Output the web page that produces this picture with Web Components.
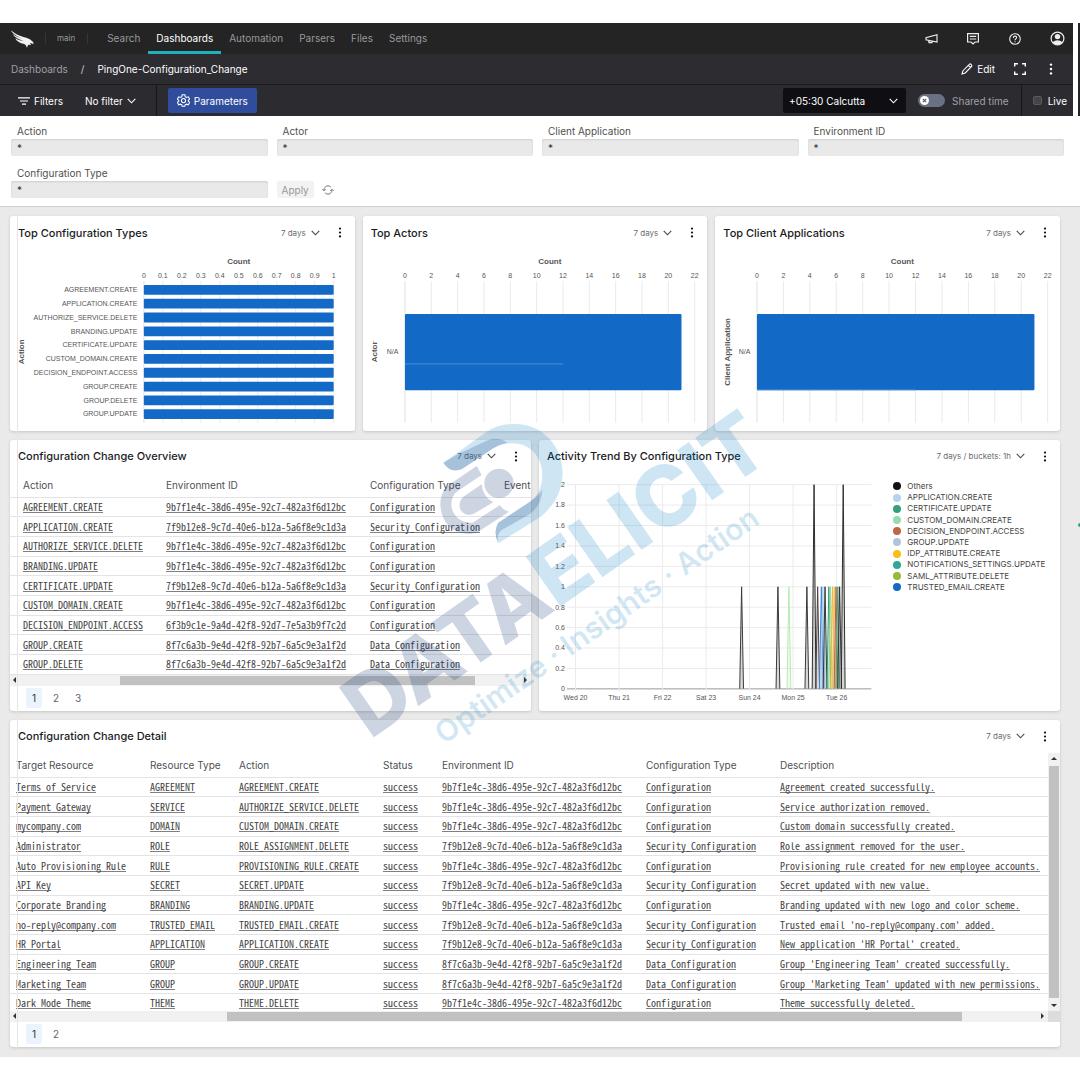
<!DOCTYPE html>
<html lang="en">
<head>
<meta charset="utf-8">
<title>PingOne-Configuration_Change</title>
<meta name="viewport" content="width=device-width, initial-scale=1">
<style>
  body { margin: 0; background: #fff; font-family: Inter, "Liberation Sans", sans-serif; color: #222; }
</style>
</head>
<body>
<dashboard-page></dashboard-page>

<script>
const chevron = '<svg class="chev" width="9" height="6" viewBox="0 0 9 6" fill="none" stroke="currentColor" stroke-width="1.1" aria-hidden="true"><path d="M.7.8 4.5 4.8 8.3.8"/></svg>';

class BaseElement extends HTMLElement {
  connectedCallback() {
    if (this.shadowRoot) return;
    this.attachShadow({ mode: 'open' }).innerHTML =
      '<style>*{box-sizing:border-box}button,input,select{font:inherit;color:inherit;margin:0;border:0;padding:0;background:none}a{color:inherit}svg{display:block}' +
      this.css() + '</style>' + this.html();
  }
}

customElements.define('top-nav', class extends BaseElement {
  css() { return `
    :host { display: flex; align-items: center; height: 31px; background: #242424; color: #98989e; font-size: 10px; padding: 0 8px 0 11px; }
    .logo { width: 23px; height: 18px; }
    .space { font-size: 8px; margin: 0 10px 0 11px; padding: 0 12px 0 11px; border: solid #37373a; border-width: 0 1px; line-height: 11px; }
    nav { display: flex; align-self: stretch; margin-left: 1px; }
    nav a { display: flex; align-items: center; padding: 0 8px 1px; text-decoration: none; border: solid transparent; border-width: 3px 0; }
    nav a.on { color: #fff; border-bottom-color: #22b1b8; }
    .tools { display: flex; align-items: center; gap: 28px; margin-left: auto; color: #eee; }
  `; }
  html() { return `
    <svg class="logo" viewBox="0 0 69 54" fill="#f2f2f2" aria-label="Falcon"><path d="M0 1C10 10 20 15 31 19C42 23 55 25 60 31C64 34 69 36 67 43C64 40 61 39 57 40L60 46C55 43 51 43 50 48L48 53C45 47 44 43 39 42C27 40 16 33 13 25C22 31 31 32 38 34C25 28 10 22 5 13C15 20 26 24 34 27C21 20 5 14 0 1Z"/></svg>
    <span class="space">main</span>
    <nav><a href="#search">Search</a><a class="on" href="#dashboards">Dashboards</a><a href="#automation">Automation</a><a href="#parsers">Parsers</a><a href="#files">Files</a><a href="#settings">Settings</a></nav>
    <div class="tools">
      <button aria-label="Announcements"><svg width="13" height="14" viewBox="0 0 13 14" fill="none" stroke="currentColor" stroke-width="1.1"><path d="M12 2.8V10L1 7.8V5.6ZM3.5 8.3 4 10.6H7V9"/></svg></button>
      <button aria-label="Messages"><svg width="14" height="14" viewBox="0 0 14 14" fill="none" stroke="currentColor" stroke-width="1.2"><path d="M1.6 1.6H12.4V10H9L7 12L5 10H1.6ZM3.8 4.4H10.2M3.8 7H10.2"/></svg></button>
      <button aria-label="Help"><svg width="14" height="14" viewBox="0 0 14 14" fill="none" stroke="currentColor" stroke-width="1.1"><circle cx="7" cy="7" r="5.3"/><path d="M5.3 5.9C5.3 3.5 8.8 3.6 8.6 5.7C8.5 6.8 7 6.8 7 8.2M7 9.2V10.3"/></svg></button>
      <button aria-label="Account"><svg width="15" height="15" viewBox="0 0 15 15"><circle cx="7.5" cy="7.5" r="6.4" fill="none" stroke="currentColor" stroke-width="1.2"/><circle cx="7.5" cy="5.6" r="2.7" fill="currentColor"/><path fill="currentColor" d="M2.6 10.9Q7.5 7.4 12.4 10.9Q10.5 13.8 7.5 13.8T2.6 10.9Z"/></svg></button>
    </div>`; }
});

customElements.define('crumb-bar', class extends BaseElement {
  css() { return `
    :host { display: flex; align-items: center; height: 31px; background: #2d2c31; border-bottom: 1px solid #1a1a1c; color: #a0a0a6; font-size: 10px; padding: 0 16px 0 11px; }
    a { text-decoration: none; }
    i { font-style: normal; margin: 0 13px; color: #c8c8cc; }
    strong { color: #fff; font-weight: 400; }
    .tools { display: flex; align-items: center; gap: 19px; margin-left: auto; color: #fff; }
    .edit { display: flex; align-items: center; gap: 4px; }
  `; }
  html() { return `
    <a href="#dashboards">Dashboards</a><i>/</i><strong>PingOne-Configuration_Change</strong>
    <div class="tools">
      <button class="edit"><svg width="12" height="12" viewBox="0 0 12 12" fill="none" stroke="currentColor" stroke-width="1.1"><path d="M1 11 2 7.7 8.6 1.1Q9.3.6 10.1 1.4T10.8 3.2L4.2 9.9ZM7.4 2.4 9.5 4.5"/></svg>Edit</button>
      <button aria-label="Full screen"><svg width="12" height="12" viewBox="0 0 12 12" fill="none" stroke="currentColor" stroke-width="1.4"><path d="M.7 3.6V.7H3.9M8.1.7H11.3V3.6M11.3 8.4V11.3H8.1M3.9 11.3H.7V8.4"/></svg></button>
      <button aria-label="More"><svg width="12" height="12" viewBox="0 0 12 12" fill="currentColor"><circle cx="6" cy="1.6" r="1.2"/><circle cx="6" cy="6" r="1.2"/><circle cx="6" cy="10.4" r="1.2"/></svg></button>
    </div>`; }
});

customElements.define('filter-bar', class extends BaseElement {
  css() { return `
    :host { display: flex; align-items: center; height: 31px; background: #2c2b30; color: #fff; font-size: 10px; padding: 0 6px 0 18px; }
    button { display: flex; align-items: center; gap: 4px; white-space: nowrap; }
    .nof { margin: 0 20px 0 22px; }
    .bar { align-self: stretch; width: 1px; background: #161618; }
    .prm { height: 25px; margin-left: 11px; padding: 0 9px; background: #304d9d; border-radius: 2px; }
    .zone { display: flex; align-items: center; width: 123px; height: 25px; background: #0f0e13; border-radius: 2px; margin-left: auto; padding-right: 8px; }
    select { appearance: none; flex: 1; height: 25px; padding-left: 6px; outline: 0; }
    .zone svg { pointer-events: none; }
    .sw { display: flex; align-items: center; gap: 7px; margin: 0 12px; color: #a0a0a6; }
    .sw span { position: relative; }
    .sw input { appearance: none; display: block; width: 27px; height: 13px; border-radius: 7px; background: #6a7184; }
    .sw svg { position: absolute; left: 2px; top: 2px; pointer-events: none; }
    .live { display: flex; align-items: center; gap: 6px; margin-left: 11px; }
    .live input { appearance: none; width: 9px; height: 9px; background: #454549; border: 1px solid #5a5a5e; border-radius: 2px; }
  `; }
  html() { return `
    <button><svg width="12" height="8" viewBox="0 0 12 8" stroke="currentColor" stroke-width="1.2"><path d="M0 .8H12M2 4H10M4 7.2H8"/></svg>Filters</button>
    <button class="nof">No filter ${chevron}</button>
    <div class="bar"></div>
    <button class="prm"><svg width="13" height="13" viewBox="0 0 24 24" fill="none" stroke="currentColor" stroke-width="2"><path d="M9.5 1.5H14.5L15.2 5L17.5 6.3L20.9 5.2L23.3 9.5L20.7 11.9V13.1L23.3 15.5L20.9 19.8L17.5 18.7L15.2 20L14.5 22.5H9.5L8.8 20L6.5 18.7L3.1 19.8L.7 15.5L3.3 13.1V11.9L.7 9.5L3.1 5.2L6.5 6.3L8.8 5Z"/><circle cx="12" cy="12.2" r="3.8"/></svg>Parameters</button>
    <div class="zone"><select aria-label="Time zone"><option>+05:30 Calcutta</option></select>${chevron}</div>
    <label class="sw"><span><input type="checkbox" role="switch"><svg width="9" height="9" viewBox="0 0 9 9"><circle cx="4.5" cy="4.5" r="4.5" fill="#fff"/><path stroke="#555b6c" stroke-width="1.2" d="M2.8 2.8 6.2 6.2M6.2 2.8 2.8 6.2"/></svg></span>Shared time</label>
    <div class="bar"></div>
    <label class="live"><input type="checkbox">Live</label>`; }
});

customElements.define('param-field', class extends BaseElement {
  css() { return `
    :host { display: block; }
    label { display: block; font-size: 10px; line-height: 15px; padding-left: 6px; color: #505050; }
    input { display: block; width: 100%; height: 17px; padding: 0 6px; background: #e9e9e9; border-radius: 2px; box-shadow: inset 0 1px 2px #cfcfcf; font-size: 10px; color: #333; outline: 0; }
  `; }
  html() { return `<label for="f">${this.getAttribute('label')}</label><input id="f" type="text" value="*">`; }
});

customElements.define('param-panel', class extends BaseElement {
  css() { return `
    :host { display: grid; grid-template-columns: repeat(4, 1fr); gap: 10px 9px; align-items: end; padding: 8px 16px 8px 11px; background: #fff; border-bottom: 1px solid #cfcfcf; }
    .act { display: flex; align-items: center; gap: 8px; }
    .apply { height: 17px; padding: 0 5px; background: #f2f2f2; color: #999; font-size: 10px; border-radius: 2px; }
    .re { color: #777; }
  `; }
  html() { return `
    <param-field label="Action"></param-field><param-field label="Actor"></param-field>
    <param-field label="Client Application"></param-field><param-field label="Environment ID"></param-field>
    <param-field label="Configuration Type"></param-field>
    <div class="act"><button class="apply">Apply</button><button class="re" aria-label="Reset"><svg width="12" height="10" viewBox="0 0 12 10" fill="none" stroke="currentColor"><path d="M2 5.3C2 .4 7.2-.2 9.2 2.4M10 4.7C10 9.6 4.8 10.2 2.8 7.6M.3 4 2 5.8 3.8 4M8.2 6 10 4.2 11.7 6"/></svg></button></div>`; }
});

customElements.define('dash-card', class extends BaseElement {
  css() { return `
    :host { display: flex; flex-direction: column; min-width: 0; background: #fff; border-radius: 3px; box-shadow: 0 1px 3px #c4c4c4; overflow: hidden; }
    header { display: flex; align-items: center; height: 33px; padding: 0 13px 0 8px; flex: none; }
    h2 { margin: 0; font-size: 11px; font-weight: 500; color: #1c1c1e; flex: 1; white-space: nowrap; }
    button { display: flex; align-items: center; gap: 5px; font-size: 8px; color: #6c6c70; }
    .chev { color: #444; }
    .more { margin-left: 18px; }
  `; }
  html() { return `
    <header><h2>${this.getAttribute('heading')}</h2><button>${this.getAttribute('range') || '7 days'}${chevron}</button>
    <button class="more" aria-label="More"><svg width="4" height="11" viewBox="0 0 4 11" fill="#111"><circle cx="2" cy="1.6" r="1.1"/><circle cx="2" cy="5.5" r="1.1"/><circle cx="2" cy="9.4" r="1.1"/></svg></button></header>
    <slot></slot>`; }
});

const chartText = 'svg{width:100%;height:auto}text{font-family:"Liberation Sans",sans-serif;font-size:7px;fill:#555}.ttl{font-size:8px;font-weight:700}';

customElements.define('bar-chart', class extends BaseElement {
  css() { return ':host{display:block}' + chartText; }
  html() {
    const n = k => Number(this.getAttribute(k));
    const labels = this.getAttribute('labels').split(' '), x0 = n('left'), x1 = n('right'), max = n('max'), step = n('step');
    const top = 32, bottom = 174, many = labels.length > 1, pitch = many ? 13.83 : 76, bar = many ? 9.8 : 76.5, y0 = many ? 36 : 65;
    let s = `<text class="ttl" text-anchor="middle" x="${(x0 + x1) / 2}" y="15">Count</text>`;
    s += `<text class="ttl" text-anchor="middle" transform="translate(${n('axis-x')} 103) rotate(-90)">${this.getAttribute('axis')}</text>`;
    for (let i = 0; i * step <= max + 1e-6; i++) {
      const x = x0 + (x1 - x0) * i * step / max;
      s += `<path d="M${x} ${top}V${bottom}" stroke="#eaeaec" stroke-width="${i ? 1 : 1.5}"/><text text-anchor="middle" x="${x}" y="29">${+(i * step).toFixed(1)}</text>`;
    }
    labels.forEach((l, i) => {
      const y = y0 + i * pitch, w = (x1 - x0) * n('value') / max;
      s += `<rect x="${x0}" y="${y}" width="${w}" height="${bar}" rx="1" fill="#126ac6"/><text text-anchor="end" x="${x0 - 6.5}" y="${y + bar / 2 + 2.3}">${l}</text>`;
    });
    if (this.hasAttribute('mark')) s += `<path d="M${x0} ${n('mark')}H${x0 + (x1 - x0) * 12 / 22}" stroke="#5b97d8" stroke-width=".8"/>`;
    return `<svg viewBox="0 0 345 182" role="img" aria-label="${this.getAttribute('axis')} count">${s}</svg>`;
  }
});

customElements.define('trend-chart', class extends BaseElement {
  css() { return `:host{display:grid;grid-template-columns:355fr 167fr}${chartText}
    ul { list-style: none; margin: 8px 0 0; padding: 0; height: 112px; display: flex; flex-direction: column; font-size: 8px; color: #444; }
    li { flex: 1; display: flex; align-items: center; gap: 6px; white-space: nowrap; line-height: 11px; }
    li::before { content: ""; width: 8px; height: 8px; border-radius: 50%; background: var(--c); }`; }
  html() {
    let s = '';
    for (let i = 0; i <= 10; i++) {
      const y = 216.3 - i * 20.46;
      s += `<path d="M28 ${y}H333" stroke="${i ? '#ebebed' : '#999'}"/><text text-anchor="end" x="26" y="${y + 2.4}">${+(i * .2).toFixed(1)}</text>`;
    }
    ['Wed 20', 'Thu 21', 'Fri 22', 'Sat 23', 'Sun 24', 'Mon 25', 'Tue 26'].forEach((d, i) => {
      const x = 36.6 + 43.6 * i;
      s += `<path d="M${x} 11.7V219" stroke="#ebebed"/><text text-anchor="middle" x="${x}" y="227">${d}</text>`;
    });
    [[203, 1, '#3a3a3c'], [239.4, 1, '#3a3a3c'], [250.4, 1, '#b4edae'], [268.4, 1, '#3a3a3c'], [275.6, 2, '#2c2c2e'], [279.2, 1, '#4a4044'], [282.9, 1, '#3f86d6'], [284.4, 1, '#a9cdec'], [286.6, 1, '#33373f'], [290.4, 1, '#2ba36e'], [292, 1, '#93d8ac'], [294, 1, '#f5bd1f'], [295.8, 1, '#e8c07a'], [297.6, 1, '#bb5f3f'], [299.4, 1, '#3fa77e'], [301.2, 1, '#303034'], [304.8, 2, '#2c2c2e']].forEach(([x, v, c]) => {
      s += `<path d="M${x - 1.9} 216L${x} ${216.3 - v * 102.3}L${x + 1.9} 216" fill="${c}" fill-opacity=".2" stroke="${c}" stroke-linejoin="bevel"/>`;
    });
    const legend = [['Others', '#111'], ['APPLICATION.CREATE', '#b3d3ef'], ['CERTIFICATE.UPDATE', '#33a17c'], ['CUSTOM_DOMAIN.CREATE', '#98dbb0'], ['DECISION_ENDPOINT.ACCESS', '#bf6647'], ['GROUP.UPDATE', '#b2c4dc'], ['IDP_ATTRIBUTE.CREATE', '#f8be1c'], ['NOTIFICATIONS_SETTINGS.UPDATE', '#2fa894'], ['SAML_ATTRIBUTE.DELETE', '#97bb33'], ['TRUSTED_EMAIL.CREATE', '#126ac6']];
    return `<svg viewBox="0 0 355 238" role="img" aria-label="Activity trend">${s}</svg><ul>${legend.map(([t, c]) => `<li style="--c:${c}">${t}</li>`).join('')}</ul>`;
  }
});

const ENV = { a: '9b7f1e4c-38d6-495e-92c7-482a3f6d12bc', b: '7f9b12e8-9c7d-40e6-b12a-5a6f8e9c1d3a', c: '6f3b9c1e-9a4d-42f8-92d7-7e5a3b9f7c2d', d: '8f7c6a3b-9e4d-42f8-92b7-6a5c9e3a1f2d' };
const C = 'Configuration', S = 'Security_Configuration', D = 'Data_Configuration', ok = 'success';
const TABLES = {
  overview: { cols: ['Action', 'Environment ID', 'Configuration Type', 'Event'], rows: [
    ['AGREEMENT.CREATE', ENV.a, C], ['APPLICATION.CREATE', ENV.b, S], ['AUTHORIZE_SERVICE.DELETE', ENV.a, C], ['BRANDING.UPDATE', ENV.a, C], ['CERTIFICATE.UPDATE', ENV.b, S], ['CUSTOM_DOMAIN.CREATE', ENV.a, C], ['DECISION_ENDPOINT.ACCESS', ENV.c, C], ['GROUP.CREATE', ENV.d, D], ['GROUP.DELETE', ENV.d, D]] },
  detail: { cols: ['Target Resource', 'Resource Type', 'Action', 'Status', 'Environment ID', 'Configuration Type', 'Description'], rows: [
    ['Terms of Service', 'AGREEMENT', 'AGREEMENT.CREATE', ok, ENV.a, C, 'Agreement created successfully.'],
    ['Payment Gateway', 'SERVICE', 'AUTHORIZE_SERVICE.DELETE', ok, ENV.a, C, 'Service authorization removed.'],
    ['mycompany.com', 'DOMAIN', 'CUSTOM_DOMAIN.CREATE', ok, ENV.a, C, 'Custom domain successfully created.'],
    ['Administrator', 'ROLE', 'ROLE_ASSIGNMENT.DELETE', ok, ENV.b, S, 'Role assignment removed for the user.'],
    ['Auto Provisioning Rule', 'RULE', 'PROVISIONING_RULE.CREATE', ok, ENV.a, C, 'Provisioning rule created for new employee accounts.'],
    ['API Key', 'SECRET', 'SECRET.UPDATE', ok, ENV.b, S, 'Secret updated with new value.'],
    ['Corporate Branding', 'BRANDING', 'BRANDING.UPDATE', ok, ENV.a, C, 'Branding updated with new logo and color scheme.'],
    ['no-reply@company.com', 'TRUSTED_EMAIL', 'TRUSTED_EMAIL.CREATE', ok, ENV.b, S, "Trusted email 'no-reply@company.com' added."],
    ['HR Portal', 'APPLICATION', 'APPLICATION.CREATE', ok, ENV.b, S, "New application 'HR Portal' created."],
    ['Engineering Team', 'GROUP', 'GROUP.CREATE', ok, ENV.d, D, "Group 'Engineering Team' created successfully."],
    ['Marketing Team', 'GROUP', 'GROUP.UPDATE', ok, ENV.d, D, "Group 'Marketing Team' updated with new permissions."],
    ['Dark Mode Theme', 'THEME', 'THEME.DELETE', ok, ENV.a, C, 'Theme successfully deleted.']] }
};

customElements.define('data-table', class extends BaseElement {
  css() { return `
    :host { display: block; overflow: hidden; min-width: 0; }
    table { table-layout: fixed; width: 100%; height: var(--table-height); border-spacing: 0; }
    th { height: 25px; font-size: 10px; font-weight: 400; color: #505054; text-align: left; }
    th, td { padding: 0; white-space: nowrap; border-bottom: 1px solid #e4e4e6; }
    th:first-child, td:first-child { padding-left: var(--first-pad); }
    td { font-family: "Noto Sans Mono CJK SC", "Liberation Mono", monospace; font-size: 10px; line-height: 12px; color: #444; }
    a { text-decoration: underline #808084 1px; text-underline-offset: 1px; text-decoration-skip-ink: none; }
  `; }
  html() {
    const t = TABLES[this.getAttribute('source')];
    const w = this.getAttribute('widths').split(' ');
    return `<table><colgroup>${w.map(x => `<col style="width:${x}">`).join('')}</colgroup><thead><tr>${t.cols.map(c => `<th scope="col">${c}</th>`).join('')}</tr></thead><tbody>${t.rows.map(r => `<tr>${t.cols.map((_, i) => `<td>${r[i] ? `<a href="#q">${r[i]}</a>` : ''}</td>`).join('')}</tr>`).join('')}</tbody></table>`;
  }
});

customElements.define('scroll-rail', class extends BaseElement {
  css() { return `
    :host { display: grid; grid-template-columns: var(--split); height: 11px; background: #f1f1f1; padding: 1px 4px 1px 3px; align-items: center; }
    :host([vertical]) { grid-template-columns: none; grid-template-rows: var(--split); height: auto; width: 12px; padding: 4px 1px; }
    b { background: #c1c1c1; height: 100%; width: 100%; }
    i { width: 0; height: 0; border: 3px solid transparent; }
    .s { border-right: 3px solid #333; border-left: 0; justify-self: start; }
    .e { border-left: 3px solid #333; border-right: 0; justify-self: end; }
    :host([vertical]) .s { border: 3px solid transparent; border-bottom-color: #333; border-top: 0; align-self: start; justify-self: center; }
    :host([vertical]) .e { border: 3px solid transparent; border-top-color: #333; border-bottom: 0; align-self: end; justify-self: center; }
  `; }
  html() { return '<i class="s"></i><b></b><i class="e"></i>'; }
});

customElements.define('page-list', class extends BaseElement {
  css() { return `
    :host { display: flex; gap: 6px; padding: 2px 16px 3px; }
    button { width: 16px; height: 20px; border-radius: 2px; font-size: 10px; color: #66666a; }
    .on { background: #ebf4fc; color: #333; }
  `; }
  html() { return Array.from({ length: +this.getAttribute('pages') }, (_, i) => `<button class="${i ? '' : 'on'}">${i + 1}</button>`).join(''); }
});

customElements.define('brand-watermark', class extends BaseElement {
  css() { return `
    :host { position: absolute; left: 0; top: 0; width: 100%; pointer-events: none; }
    svg { width: 100%; }
    text { font-family: Inter, sans-serif; }
    .n { fill: #1d3f80; } .l { fill: #0c84c8; }
    .a { fill-opacity: .22; } .b { fill-opacity: .2; }
  `; }
  html() { return `<svg viewBox="0 0 1080 1080" aria-hidden="true">
    <g transform="translate(330 390) scale(.3333)">
      <path class="l b" d="M340 218L470 125Q510 100 560 102C640 105 700 170 698 255Q695 330 630 382L505 460Q488 425 505 398L600 335Q636 310 637 255C637 200 600 160 545 160Q515 160 490 175L395 238Q360 250 340 218Z"/>
      <path class="n a" d="M340 218L385 192L470 152Q505 138 532 158Q510 162 490 175L395 238Q360 250 340 218ZM505 460Q488 425 505 398L600 335Q630 315 637 298Q636 345 600 372L515 420Q498 435 505 460Z"/>
      <path class="n a" d="M440 228L352 288Q322 320 335 370Q352 430 420 432L440 428L537 365Q520 362 510 345L428 398Q380 400 365 355Q360 322 380 305L455 255Z"/>
      <path class="n a" d="M455 283L398 322Q382 340 393 362Q408 380 430 372L490 337Q458 320 455 283Z"/>
      <circle class="n a" cx="507" cy="280" r="44"/>
    </g>
    <text class="n a" transform="translate(370 740) rotate(-35)" font-size="84" font-weight="800">DATA<tspan class="l b">ELICIT</tspan></text>
    <text class="l b" transform="translate(444 745) rotate(-35)" font-size="30" font-weight="600">Optimize · Insights · Action</text>
  </svg>`; }
});

customElements.define('dashboard-page', class extends BaseElement {
  css() { return `
    :host { display: block; position: relative; padding-top: 23px; overflow: hidden; }
    .top { display: flex; gap: 5px; }
    .bars { flex: 1; }
    .edge { width: 2px; background: #242428; }
    main { position: relative; background: #eaeaea; padding: 9px 20px 10px 10px; display: flex; flex-direction: column; gap: 9px; }
    .row { display: grid; gap: 8px; }
    .three { grid-template-columns: repeat(3, minmax(0, 1fr)); }
    .two { grid-template-columns: repeat(2, minmax(0, 1fr)); }
    .ov { --table-height: 202px; --first-pad: 13px; }
    .dt { --table-height: 261px; --first-pad: 6px; flex: 1; height: 258px; }
    .scroll { display: flex; }
    .foot { display: flex; }
    .foot scroll-rail { flex: 1; }
    .corner { width: 12px; background: #dcdcdc; }
    .guide { position: absolute; left: 17px; top: 9px; bottom: 6px; width: 1px; background: #e6e6e8; }
    .dot { position: absolute; right: 0; top: 316px; width: 2px; height: 4px; background: #33a17c; border-radius: 2px 0 0 2px; }
  `; }
  html() { return `
    <div class="top"><div class="bars"><top-nav></top-nav><crumb-bar></crumb-bar><filter-bar></filter-bar></div><div class="edge"></div></div>
    <param-panel></param-panel>
    <main>
      <div class="row three">
        <dash-card heading="Top Configuration Types"><bar-chart axis="Action" axis-x="14" left="134" right="324" max="1" step="0.1" value="1" labels="AGREEMENT.CREATE APPLICATION.CREATE AUTHORIZE_SERVICE.DELETE BRANDING.UPDATE CERTIFICATE.UPDATE CUSTOM_DOMAIN.CREATE DECISION_ENDPOINT.ACCESS GROUP.CREATE GROUP.DELETE GROUP.UPDATE"></bar-chart></dash-card>
        <dash-card heading="Top Actors"><bar-chart axis="Actor" axis-x="14" left="42" right="332" max="22" step="2" value="21" mark="115" labels="N/A"></bar-chart></dash-card>
        <dash-card heading="Top Client Applications"><bar-chart axis="Client Application" axis-x="15" left="42" right="333" max="22" step="2" value="21" mark="141" labels="N/A"></bar-chart></dash-card>
      </div>
      <div class="row two">
        <dash-card heading="Configuration Change Overview"><data-table class="ov" source="overview" widths="156px 204px 134px auto"></data-table><scroll-rail style="--split:107fr 356fr 52fr"></scroll-rail><page-list pages="3"></page-list></dash-card>
        <dash-card heading="Activity Trend By Configuration Type" range="7 days / buckets: 1h"><trend-chart></trend-chart></dash-card>
      </div>
      <dash-card heading="Configuration Change Detail">
        <div class="scroll"><data-table class="dt" source="detail" widths="140px 89px 144px 59px 204px 134px auto"></data-table><scroll-rail vertical style="--split:9fr 232fr 9fr"></scroll-rail></div>
        <div class="foot"><scroll-rail style="--split:214fr 735fr 82fr"></scroll-rail><div class="corner"></div></div>
        <page-list pages="2"></page-list>
      </dash-card>
      <div class="guide"></div><div class="dot"></div>
    </main>
    <brand-watermark></brand-watermark>`; }
});
</script>
</body>
</html>
